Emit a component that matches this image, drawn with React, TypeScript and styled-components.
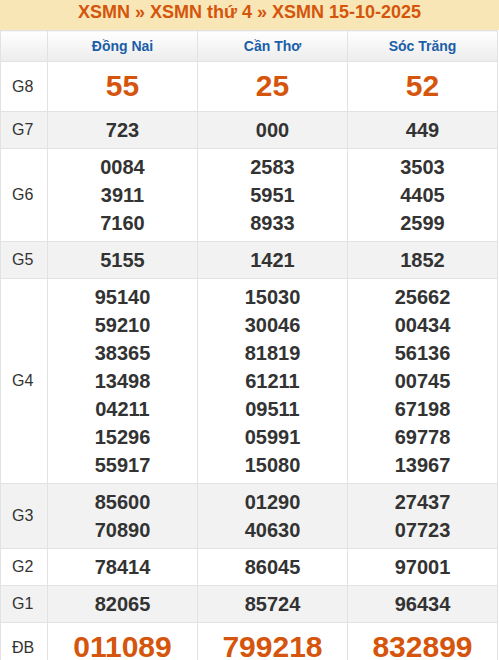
import React from 'react';
import styled, { createGlobalStyle } from 'styled-components';

const GlobalStyle = createGlobalStyle`
  body {
    margin: 0;
    background: #fff;
    font-family: 'Liberation Sans', Arial, sans-serif;
  }
`;

interface Prize {
  label: string;
  values: string[][];
  big?: boolean;
}

const provinces = ['Đồng Nai', 'Cần Thơ', 'Sóc Trăng'];

const prizes: Prize[] = [
  { label: 'G8', values: [['55'], ['25'], ['52']], big: true },
  { label: 'G7', values: [['723'], ['000'], ['449']] },
  {
    label: 'G6',
    values: [
      ['0084', '3911', '7160'],
      ['2583', '5951', '8933'],
      ['3503', '4405', '2599'],
    ],
  },
  { label: 'G5', values: [['5155'], ['1421'], ['1852']] },
  {
    label: 'G4',
    values: [
      ['95140', '59210', '38365', '13498', '04211', '15296', '55917'],
      ['15030', '30046', '81819', '61211', '09511', '05991', '15080'],
      ['25662', '00434', '56136', '00745', '67198', '69778', '13967'],
    ],
  },
  {
    label: 'G3',
    values: [
      ['85600', '70890'],
      ['01290', '40630'],
      ['27437', '07723'],
    ],
  },
  { label: 'G2', values: [['78414'], ['86045'], ['97001']] },
  { label: 'G1', values: [['82065'], ['85724'], ['96434']] },
  { label: 'ĐB', values: [['011089'], ['799218'], ['832899']], big: true },
];

const Wrapper = styled.div`
  width: 499px;
`;

const Title = styled.h2`
  margin: 0;
  height: 30px;
  line-height: 24px;
  background: #f8e6b6;
  color: #d4550b;
  font-size: 18px;
  font-weight: bold;
  text-align: center;
`;

const Table = styled.table`
  width: 498px;
  border-collapse: collapse;
  table-layout: fixed;
  border-left: 1px solid #d0d0d0;
  border-right: 1px solid #d0d0d0;
`;

const HeadCell = styled.th`
  height: 22px;
  padding: 4px 0;
  border: 1px solid #e2e2e2;
  background: linear-gradient(#ffffff, #ececec);
  color: #1b5ea8;
  font-size: 14px;
  font-weight: bold;
  text-align: center;
`;

const Row = styled.tr<{ $alt: boolean }>`
  background: ${(p) => (p.$alt ? '#f2f2f2' : '#ffffff')};
`;

const LabelCell = styled.td`
  padding: 4px 0 4px 11px;
  border: 1px solid #e2e2e2;
  color: #333;
  font-size: 16px;
  text-align: left;
`;

const NumberCell = styled.td<{ $big?: boolean }>`
  padding: ${(p) => (p.$big ? '3px 0 5px' : '4px 0')};
  border: 1px solid #e2e2e2;
  text-align: center;
  font-weight: bold;
  font-size: ${(p) => (p.$big ? '30px' : '20px')};
  line-height: ${(p) => (p.$big ? '41px' : '28px')};
  color: ${(p) => (p.$big ? '#d4550b' : '#333')};
`;

const NumberLine = styled.div`
  white-space: nowrap;
`;

export default function App() {
  return (
    <Wrapper>
      <GlobalStyle />
      <Title>XSMN » XSMN thứ 4 » XSMN 15-10-2025</Title>
      <Table>
        <colgroup>
          <col style={{ width: 47 }} />
          <col style={{ width: 150 }} />
          <col style={{ width: 150 }} />
          <col style={{ width: 150 }} />
        </colgroup>
        <thead>
          <tr>
            <HeadCell />
            {provinces.map((p) => (
              <HeadCell key={p}>{p}</HeadCell>
            ))}
          </tr>
        </thead>
        <tbody>
          {prizes.map((prize, i) => (
            <Row key={prize.label} $alt={i % 2 === 1}>
              <LabelCell>{prize.label}</LabelCell>
              {prize.values.map((nums, j) => (
                <NumberCell key={j} $big={prize.big}>
                  {nums.map((n, k) => (
                    <NumberLine key={k}>{n}</NumberLine>
                  ))}
                </NumberCell>
              ))}
            </Row>
          ))}
        </tbody>
      </Table>
    </Wrapper>
  );
}
